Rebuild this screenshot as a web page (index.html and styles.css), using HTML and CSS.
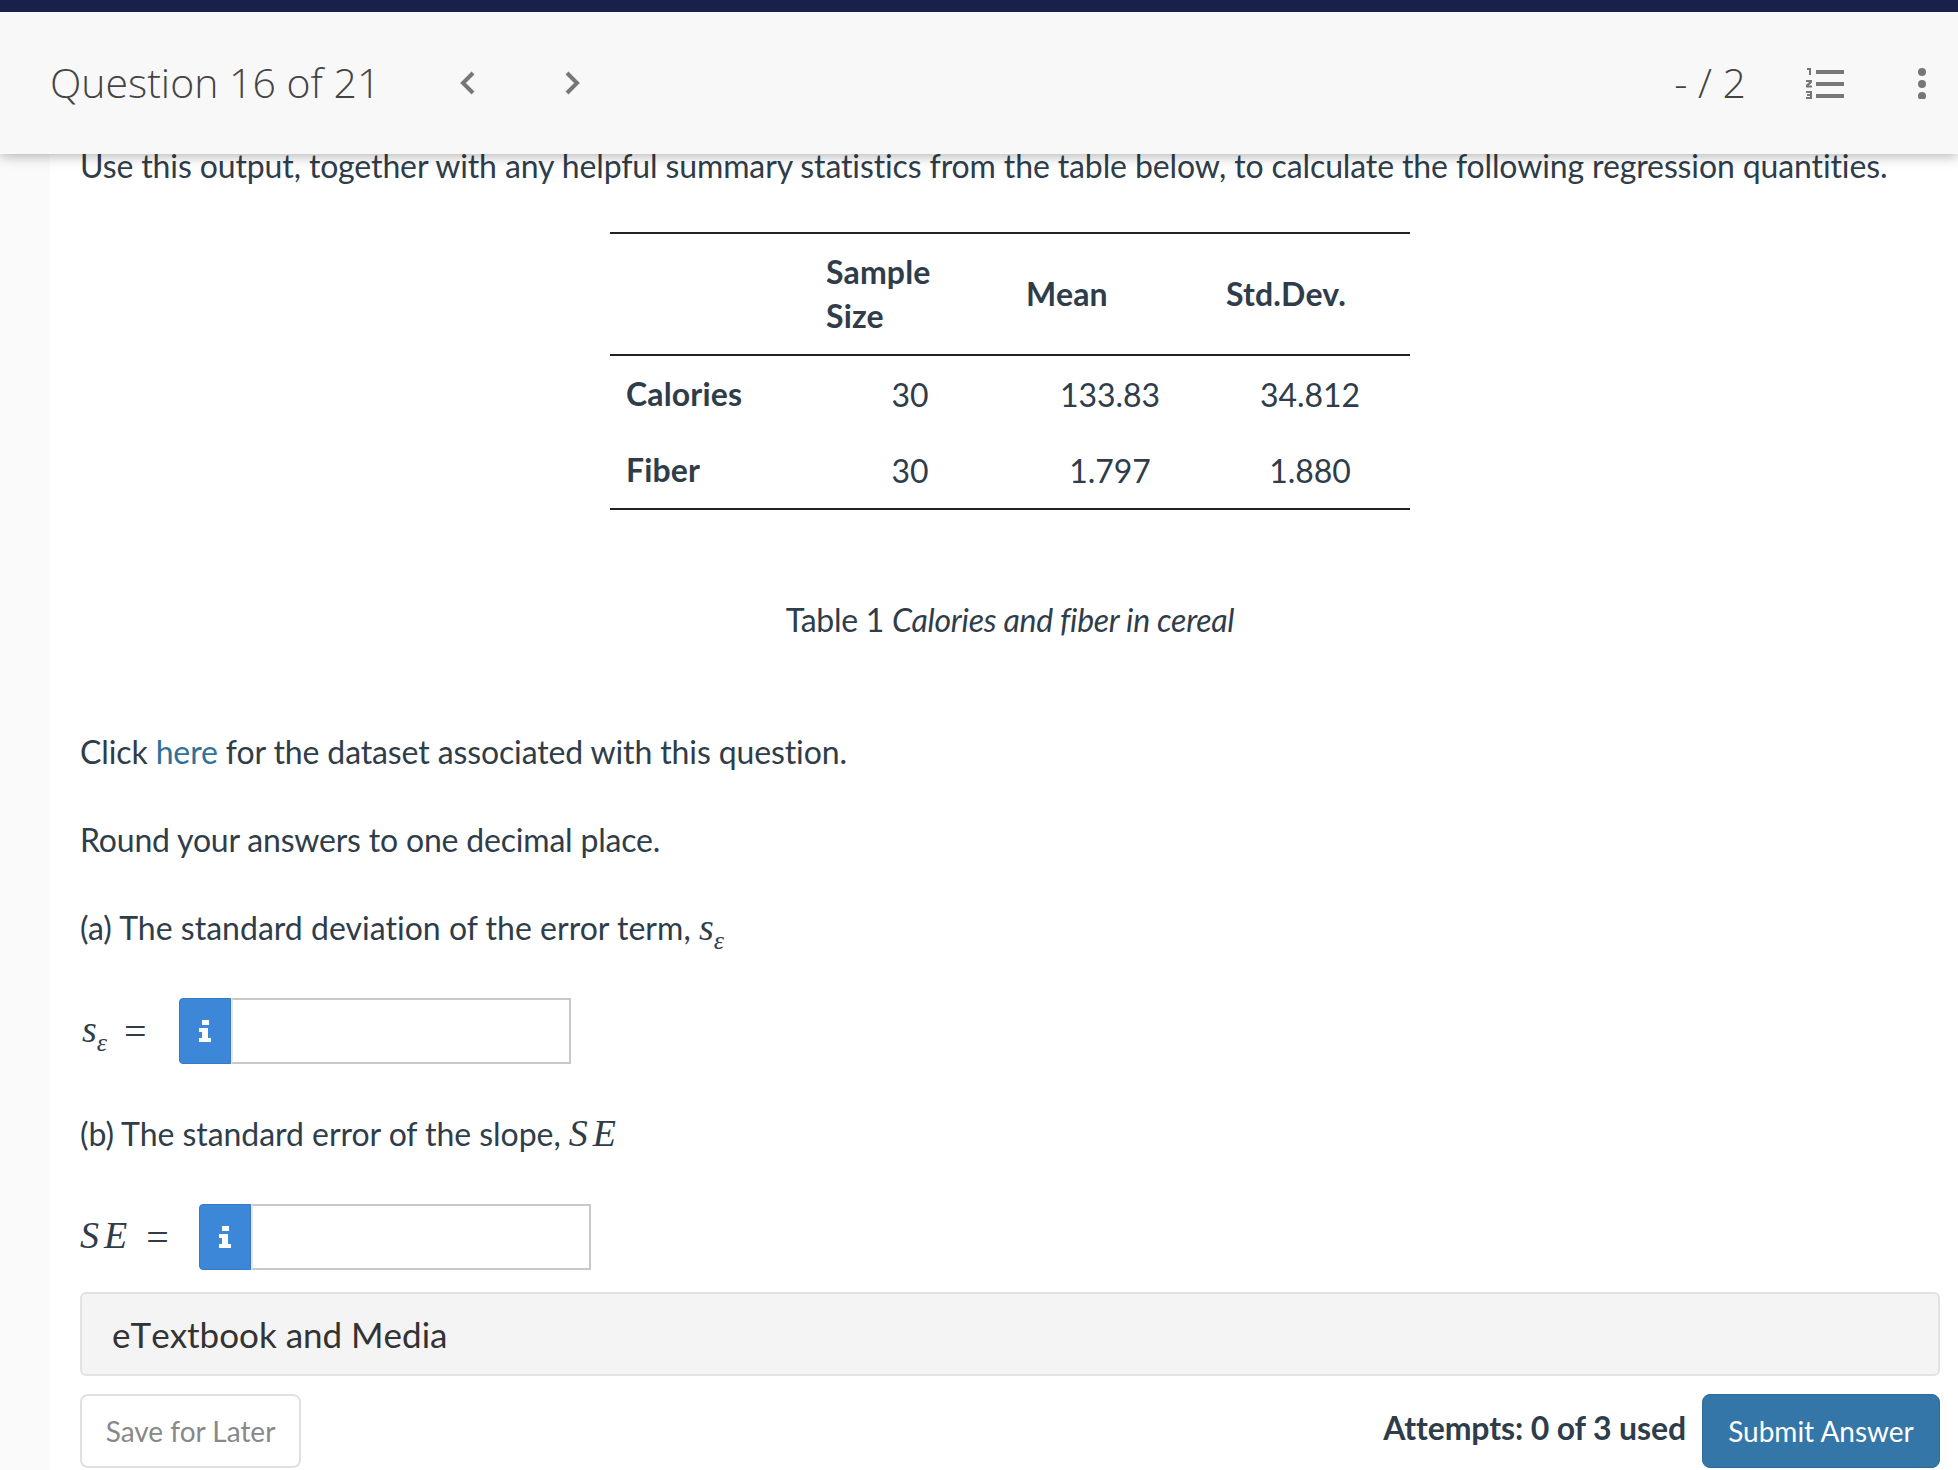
FILE: index.html
```html
<!DOCTYPE html>
<html lang="en">
<head>
    <meta charset="UTF-8">
    <title>Question 16 of 21</title>
    <link rel="stylesheet" href="styles.css">
</head>
<body>
    <header class="topbar">
        <div class="nav-left">
            <h1 class="q-title">Question 16 of 21</h1>
            <svg class="chevron" width="16" height="24" viewBox="0 0 16 24"><path d="M14 2 L4 12 L14 22" fill="none" stroke="#777" stroke-width="4"/></svg>
            <svg class="chevron chevron-next" width="16" height="24" viewBox="0 0 16 24"><path d="M2 2 L12 12 L2 22" fill="none" stroke="#777" stroke-width="4"/></svg>
        </div>
        <div class="nav-right">
            <span class="score">- / 2</span>
            <svg class="list-icon" width="38" height="32" viewBox="0 0 38 32" fill="#777">
                <rect x="10" y="3" width="28" height="4"/>
                <rect x="10" y="15" width="28" height="4"/>
                <rect x="10" y="27" width="28" height="4"/>
                <path d="M1 1h4v7h-2v-5h-2z"/>
                <path d="M0 13h6v2.5l-3.2 3h3.2v2h-6v-2.5l3.2-3h-3.2z"/>
                <path d="M0 24h6v8h-6v-2h4v-1h-3v-2h3v-1h-4z"/>
            </svg>
            <svg class="dots-icon" width="8" height="32" viewBox="0 0 8 32" fill="#777">
                <circle cx="4" cy="5" r="4"/>
                <circle cx="4" cy="17" r="4"/>
                <circle cx="4" cy="29" r="4"/>
            </svg>
        </div>
    </header>

    <main class="content">
        <p class="intro">Use this output, together with any helpful summary statistics from the table below, to calculate the following regression quantities.</p>

        <table class="stats">
            <thead>
                <tr>
                    <th></th>
                    <th>Sample<br>Size</th>
                    <th>Mean</th>
                    <th>Std.Dev.</th>
                </tr>
            </thead>
            <tbody>
                <tr><th>Calories</th><td>30</td><td>133.83</td><td>34.812</td></tr>
                <tr><th>Fiber</th><td>30</td><td>1.797</td><td>1.880</td></tr>
            </tbody>
        </table>

        <p class="caption">Table 1 <em>Calories and fiber in cereal</em></p>

        <p class="click-line">Click <a href="#">here</a> for the dataset associated with this question.</p>
        <p class="round-line">Round your answers to one decimal place.</p>
        <p class="part-a">(a) The standard deviation of the error term, <span class="math">s<sub>ε</sub></span></p>

        <div class="answer answer-a">
            <span class="math answer-label">s<sub>ε</sub></span>
            <span class="eq">=</span>
            <span class="info-btn"><svg width="14" height="22" viewBox="0 0 14 22" fill="#fff"><rect x="4" y="0" width="7" height="5"/><path d="M1 8h9v10h3v4h-12v-4h3v-6h-3z"/></svg></span>
            <input class="answer-input" type="text">
        </div>

        <p class="part-b">(b) The standard error of the slope, <span class="math math-se">SE</span></p>

        <div class="answer answer-b">
            <span class="math math-se answer-label">SE</span>
            <span class="eq">=</span>
            <span class="info-btn"><svg width="14" height="22" viewBox="0 0 14 22" fill="#fff"><rect x="4" y="0" width="7" height="5"/><path d="M1 8h9v10h3v4h-12v-4h3v-6h-3z"/></svg></span>
            <input class="answer-input" type="text">
        </div>

        <div class="media-panel">eTextbook and Media</div>

        <div class="actions">
            <button class="btn-save" type="button">Save for Later</button>
            <div class="actions-right">
                <span class="attempts">Attempts: 0 of 3 used</span>
                <button class="btn-submit" type="button">Submit Answer</button>
            </div>
        </div>
    </main>
</body>
</html>
```

FILE: styles.css
```css
html, body { margin: 0; padding: 0; height: 1470px; overflow: hidden; background-color: #fafafa; }
body { font-family: "Lato", sans-serif; color: #2f3d4a; font-size: 32px; font-variant-ligatures: no-common-ligatures; }
p { margin: 0; }

.topbar { position: relative; z-index: 2; height: 142px; border-top: 12px solid #172149; background-color: #f8f8f8; box-shadow: 0 2px 12px rgba(0, 0, 0, 0.3); display: flex; align-items: center; justify-content: space-between; padding: 0 32px 0 50px; box-sizing: content-box; }
.nav-left, .nav-right { display: flex; align-items: center; }
.q-title { margin: -2px 0 0; font-family: "Open Sans", sans-serif; font-weight: 300; font-size: 41px; color: #444; width: 409px; }
.chevron-next { margin-left: 90px; }
.score { margin-top: -2px; font-family: "Open Sans", sans-serif; font-weight: 300; font-size: 41px; color: #444; }
.list-icon { margin-left: 60px; }
.dots-icon { margin-left: 74px; }

.content { margin-left: 50px; background-color: #fff; padding: 0 18px 0 30px; height: 1324px; }
.intro { line-height: 40px; margin-top: -8px; white-space: nowrap; letter-spacing: -0.12px; }

.stats { margin: 46px 0 0 530px; width: 800px; border-collapse: collapse; table-layout: fixed; border-top: 2px solid #222; border-bottom: 2px solid #222; }
.stats thead tr { border-bottom: 2px solid #222; height: 122px; }
.stats th { font-weight: 700; text-align: left; padding: 0 16px; line-height: 44px; letter-spacing: 0.15px; }
.stats td { text-align: center; padding: 0 16px; letter-spacing: -0.1px; }
.stats tbody tr { height: 77px; }

.caption { margin-top: 90px; width: 800px; margin-left: 530px; text-align: center; line-height: 40px; letter-spacing: -0.27px; }
.caption em { font-variant-ligatures: common-ligatures; }
.click-line { margin-top: 92px; line-height: 40px; letter-spacing: -0.12px; }
.click-line a { color: #2e7199; text-decoration: none; }
.round-line { margin-top: 48px; line-height: 40px; letter-spacing: -0.19px; }
.part-a { margin-top: 48px; line-height: 40px; letter-spacing: 0.02px; }
.part-b { margin-top: 50px; line-height: 40px; letter-spacing: -0.05px; }

.math { font-family: "Liberation Serif", serif; font-style: italic; font-size: 38px; line-height: 0; }
.math sub { font-size: 26px; line-height: 0; }
.math-se { letter-spacing: 5px; }

.answer { display: flex; align-items: center; height: 66px; }
.answer-a { margin-top: 50px; }
.answer-b { margin-top: 50px; }
.answer-label { line-height: 1; margin-left: 2px; margin-top: -4px; }
.answer-b .answer-label { margin-left: 0; }
.eq { font-family: "Liberation Serif", serif; font-size: 40px; }
.answer-a .eq { margin-left: 17px; margin-right: 32px; }
.answer-b .eq { margin-left: 14px; margin-right: 30px; }
.info-btn { width: 52px; height: 66px; box-sizing: border-box; background-color: #3d87d9; border: 1px solid #3679c4; border-radius: 4px 0 0 4px; display: flex; align-items: center; justify-content: center; }
.answer-input { width: 340px; height: 66px; box-sizing: border-box; border: 2px solid #c8c8c8; border-left: 2px solid #e8e8e8; background-color: #fff; padding: 0; outline: none; }

.media-panel { margin-top: 22px; height: 84px; box-sizing: border-box; background-color: #f4f4f4; border: 2px solid #e2e2e2; border-radius: 6px; padding-left: 30px; line-height: 80px; font-size: 35px; color: #333; font-kerning: none; }

.actions { display: flex; justify-content: space-between; margin-top: 18px; }
.actions-right { display: flex; align-items: center; }
.btn-save { width: 221px; height: 74px; background-color: #fff; border: 2px solid #e0e0e0; border-radius: 8px; font-family: "Lato", sans-serif; font-size: 28px; color: #888; }
.attempts { font-weight: 700; font-size: 32px; margin-right: 16px; margin-top: -8px; letter-spacing: -0.12px; }
.btn-submit { width: 238px; height: 74px; background-color: #3576a8; border: 1px solid #2f6a98; border-radius: 8px; font-family: "Lato", sans-serif; font-size: 28px; color: #fff; }
```
